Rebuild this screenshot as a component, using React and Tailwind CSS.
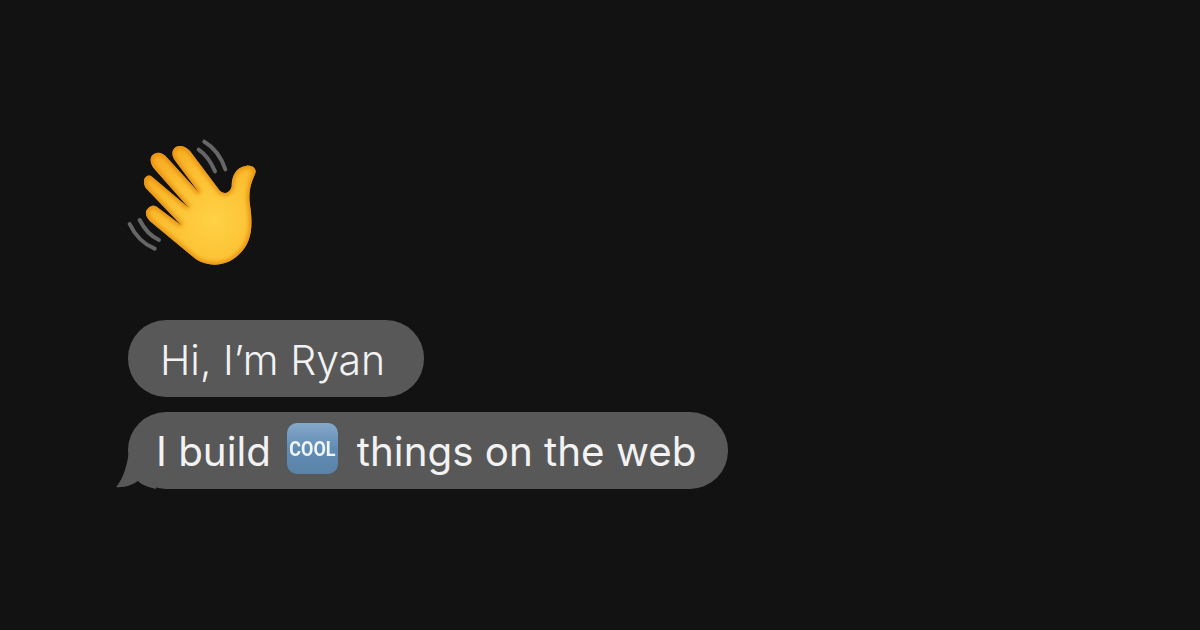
const font = { fontFamily: 'Inter, "Noto Sans", sans-serif' }

const handPath =
  'M330 183L245 70C232 50 208 42 194 54C184 63 186 78 194 90L268 189L172 84C160 68 140 62 127 76C118 86 122 102 130 113L236 233L126 140C112 130 100 145 102 158C103 170 108 175 115 182L214 286L140 230C128 222 112 232 108 245C106 258 115 268 122 275L258 388C300 414 350 408 385 375C425 340 430 290 420 225C415 190 420 165 435 132C442 120 430 105 410 107C375 112 365 140 365 170C360 187 345 195 330 183Z'

// waving hand, drawn on a 480x435 grid
function WaveHand() {
  return (
    <svg viewBox="0 0 480 435" className="block h-[145px] w-[160px] blur-[0.5px]" fill="none">
      <defs>
        <radialGradient id="skin" gradientUnits="userSpaceOnUse" cx="310" cy="270" r="240">
          <stop offset="0" stopColor="#ffd145" />
          <stop offset="0.6" stopColor="#fcc033" />
          <stop offset="1" stopColor="#f8ae26" />
        </radialGradient>
        <clipPath id="hand">
          <path d={handPath} />
        </clipPath>
        <filter id="soft" x="-20%" y="-20%" width="140%" height="140%">
          <feGaussianBlur stdDeviation="6" />
        </filter>
      </defs>
      <g stroke="#666666" strokeWidth="12" strokeLinecap="round">
        <path d="M283 35C312 52 334 82 346 118" />
        <path d="M266 59C288 74 304 98 315 124" />
        <path d="M59 282C74 314 100 342 134 356" />
        <path d="M89 270C102 296 122 318 147 330" />
      </g>
      <path d={handPath} fill="url(#skin)" />
      <g clipPath="url(#hand)">
        <path d={handPath} stroke="#e58a08" strokeWidth="13" filter="url(#soft)" />
      </g>
    </svg>
  )
}

function CoolIcon() {
  return (
    <span className="mb-[4px] ml-[16px] mr-[19px] flex h-[51px] w-[51px] shrink-0 items-center justify-center rounded-[10px] bg-gradient-to-b from-[#86a9ca] via-[#608cb4] to-[#5b83a8]">
      <span className="scale-y-110 text-[18px] font-bold leading-none text-[#f2f5f8]" style={{ fontFamily: 'Roboto, sans-serif' }}>
        COOL
      </span>
    </span>
  )
}

export default function App() {
  return (
    <div className="h-[630px] w-[1200px] overflow-hidden bg-[#121212] pl-[110px] pt-[130px]" style={font}>
      <WaveHand />
      <div className="ml-[18px] mt-[45px] flex flex-col items-start gap-[15px] text-[#f2f2f2]">
        <div className="flex h-[77px] w-[296px] items-center rounded-[38px] bg-[#585858] pl-[32px] pt-[4px] text-[41px] font-light">
          Hi, I’m Ryan
        </div>
        <div className="relative flex h-[77px] w-[600px] items-center rounded-[38px] bg-[#585858] pl-[28px] text-[40.3px]">
          <svg viewBox="0 0 40 50" className="absolute -left-[12px] bottom-0 h-[50px] w-[40px]">
            <path d="M16 0C12 15 11 36 0 48C8 49 16 46 22 42C26 46 32 48 40 50L40 0Z" fill="#585858" />
          </svg>
          <span className="relative pt-[4px]">I build</span>
          <CoolIcon />
          <span className="pt-[4px]">things on the web</span>
        </div>
      </div>
    </div>
  )
}
